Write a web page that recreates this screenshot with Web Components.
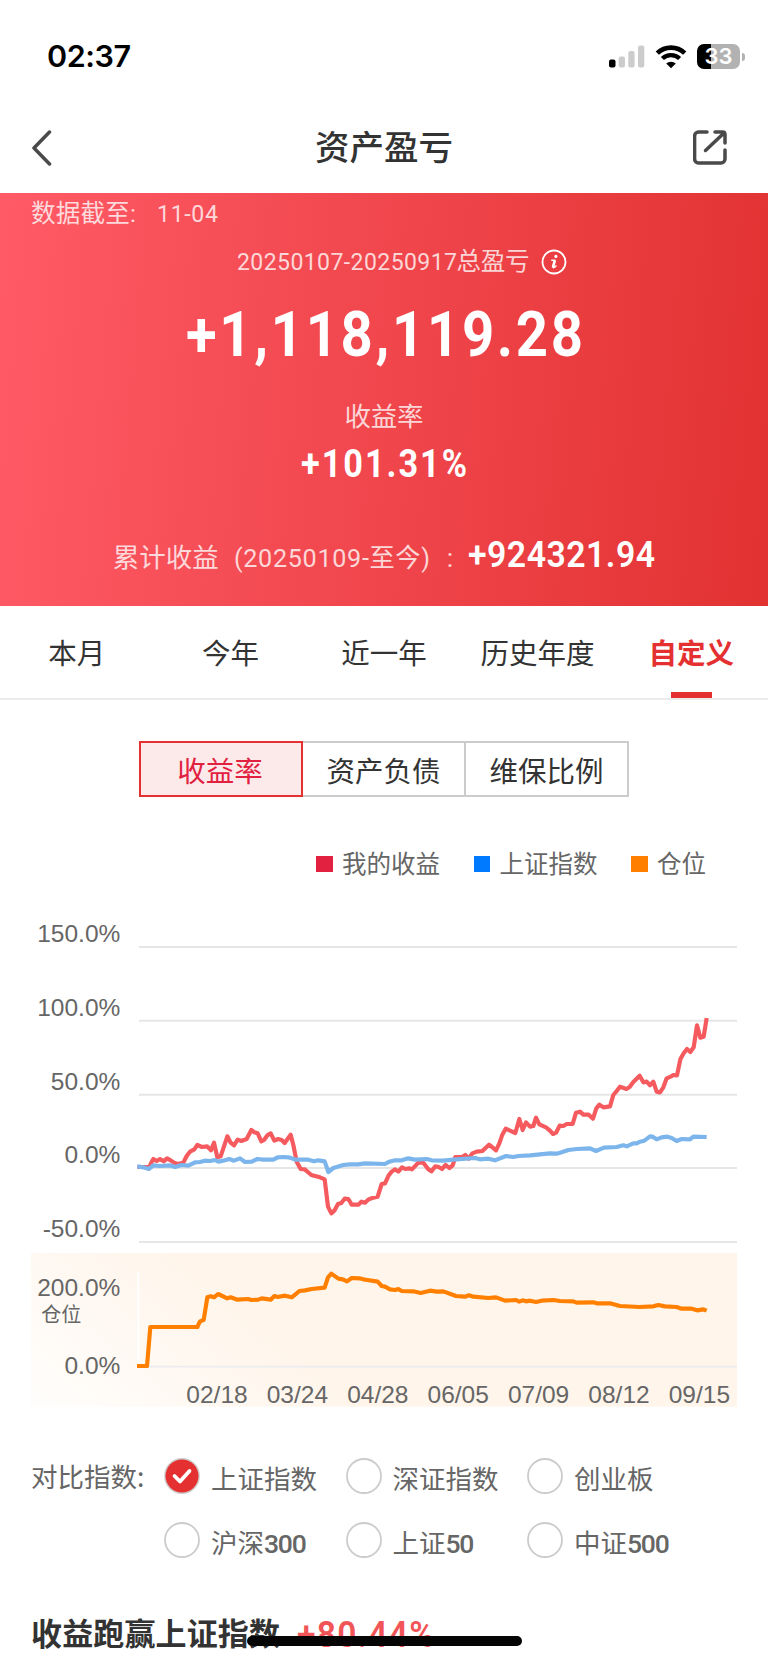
<!DOCTYPE html>
<html lang="zh-CN">
<head>
<meta charset="UTF-8">
<meta name="viewport" content="width=device-width, initial-scale=1">
<title>资产盈亏</title>
<style>
  html, body {
    margin: 0;
    background: #fff;
  }
  body {
    width: 768px;
    height: 1663px;
    overflow: hidden;
    font-family: "Noto Sans CJK SC", sans-serif;
    color: #333;
    --red: #e43030;
    --num: Roboto, "Noto Sans CJK SC", sans-serif;
  }
</style>
</head>
<body>
<profit-page></profit-page>

<script>
class StatusBar extends HTMLElement {
  constructor() {
    super();
    this.attachShadow({ mode: "open" });
  }

  connectedCallback() {
    this.shadowRoot.innerHTML = `
      <style>
        :host {
          display: flex;
          align-items: center;
          justify-content: space-between;
          height: 113px;
          padding: 0 23px 0 47px;
          box-sizing: border-box;
          color: #000;
          font: 600 30.5px/36px Inter, sans-serif;
        }
        fit-text { margin-bottom: 2px; }
        .icons { display: flex; align-items: center; gap: 10px; }
        svg { display: block; }
        .battery { display: flex; align-items: center; gap: 2px; }
        .cell {
          width: 43px;
          height: 25px;
          border-radius: 7px;
          background: linear-gradient(90deg, #000 14px, #b2b2b2 14px);
          color: #fff;
          font: 600 22px/25px Inter, sans-serif;
          text-align: center;
        }
        .nub { width: 3px; height: 8px; border-radius: 0 4px 4px 0; background: #b2b2b2; }
      </style>
      <fit-text width="84"><slot></slot></fit-text>
      <div class="icons">
        <svg width="36" height="23" viewBox="0 0 36 23">
          <rect x="0" y="14.5" width="6.5" height="8" rx="2" fill="#000"/>
          <rect x="9.7" y="11.5" width="6.3" height="11" rx="2" fill="#ccc"/>
          <rect x="19.3" y="6" width="6.3" height="16.5" rx="2" fill="#ccc"/>
          <rect x="29" y="0.5" width="6.3" height="22" rx="2" fill="#ccc"/>
        </svg>
        <svg width="32" height="24" viewBox="0 0 32 24">
          <path d="M2.3 8.2A19.5 19.5 0 0 1 29.7 8.2" fill="none" stroke="#000" stroke-width="4.7"/>
          <path d="M7.4 13.6A12.2 12.2 0 0 1 24.6 13.6" fill="none" stroke="#000" stroke-width="4.3"/>
          <path d="M16 23.3L11.2 18.6A6.9 6.9 0 0 1 20.8 18.6Z"/>
        </svg>
        <div class="battery"><div class="cell">33</div><div class="nub"></div></div>
      </div>
    `;
  }
}

class NavHeader extends HTMLElement {
  constructor() {
    super();
    this.attachShadow({ mode: "open" });
  }

  connectedCallback() {
    this.shadowRoot.innerHTML = `
      <style>
        :host {
          display: flex;
          align-items: center;
          justify-content: space-between;
          height: 80px;
          padding: 0 41px 11px 31px;
          box-sizing: border-box;
          font-size: 34.5px;
          font-weight: 500;
          line-height: 48px;
        }
        fit-text { margin: 0 0 5px 10px; }
        .side { width: 34px; }
        .side svg { display: block; fill: none; stroke: #4a4a4a; stroke-width: 3.5; stroke-linecap: round; stroke-linejoin: round; }
      </style>
      <div class="side"><svg width="22" height="36" viewBox="0 0 22 36"><path d="M18.5 2L3 18L18.5 34"/></svg></div>
      <fit-text width="138"><slot></slot></fit-text>
      <div class="side">
        <svg width="34" height="35" viewBox="0 0 34 35">
          <path d="M14 2H5.5A4 4 0 0 0 1.6 6V29A4 4 0 0 0 5.5 33H28A4 4 0 0 0 32 29V20"/>
          <path d="M22 2H29.5Q32 2 32 4.5V13M31 3L12.5 20.5"/>
        </svg>
      </div>
    `;
  }
}

class ProfitSummary extends HTMLElement {
  constructor() {
    super();
    this.attachShadow({ mode: "open" });
  }

  connectedCallback() {
    this.shadowRoot.innerHTML = `
      <style>
        :host {
          display: flex;
          flex-direction: column;
          align-items: center;
          height: 413px;
          background: linear-gradient(95deg, #ff5a66 0%, #f0464c 50%, #e23232 100%);
          color: #fff;
          font-family: var(--num);
          white-space: nowrap;
        }
        .soft { color: rgba(255, 255, 255, .78); }
        .updated {
          align-self: stretch;
          display: flex;
          gap: 21px;
          padding: 7px 0 0 31px;
          font-size: 24.6px;
          line-height: 28px;
        }
        .period {
          display: flex;
          align-items: center;
          gap: 11px;
          margin: 20px 0 0 35px;
          font-size: 24.5px;
          line-height: 28px;
        }
        .period svg { display: block; }
        .total { margin-top: 23px; font-size: 62.5px; line-height: 72px; font-weight: 700; }
        .label { margin-top: 30px; font-size: 26.5px; line-height: 32px; }
        .rate { margin-top: 9px; font-size: 38px; line-height: 44px; font-weight: 700; }
        .sum {
          display: flex;
          align-items: baseline;
          margin-top: 46px;
          font-size: 26.5px;
          line-height: 44px;
        }
        .sum .a { margin-right: 15px; }
        .sum .c { margin: 0 15px 0 17px; }
        .sum .d { font-size: 37.5px; font-weight: 600; }
      </style>
      <div class="updated soft"><fit-text width="105">数据截至:</fit-text><fit-text width="61" squeeze=".94">11-04</fit-text></div>
      <div class="period soft">
        <span><fit-text width="220" squeeze=".94">20250107-20250917</fit-text><fit-text width="73">总盈亏</fit-text></span>
        <svg width="26" height="26" viewBox="0 0 26 26">
          <circle cx="13" cy="13" r="11.5" fill="none" stroke="#fff" stroke-width="1.8"/>
          <circle cx="14.9" cy="7.4" r="1.6" fill="#fff"/>
          <path d="M10.8 11.2H14L11.9 18.2Q12.2 19.6 15 17" fill="none" stroke="#fff" stroke-width="1.5" stroke-linecap="round" stroke-linejoin="round"/>
          <path d="M13.8 11.5L12 18.2" stroke="#fff" stroke-width="2.6"/>
        </svg>
      </div>
      <div class="total"><fit-text width="397" squeeze=".9">+1,118,119.28</fit-text></div>
      <div class="label soft"><fit-text width="79">收益率</fit-text></div>
      <div class="rate"><fit-text width="166" squeeze=".9">+101.31%</fit-text></div>
      <div class="sum">
        <fit-text class="a soft" width="106">累计收益</fit-text>
        <fit-text class="b soft" width="196" squeeze=".95">(20250109-至今)</fit-text>
        <span class="c soft">:</span>
        <fit-text class="d" width="187" squeeze=".9">+924321.94</fit-text>
      </div>
    `;
  }
}

class PeriodTabs extends HTMLElement {
  constructor() {
    super();
    this.attachShadow({ mode: "open" });
  }

  connectedCallback() {
    this.shadowRoot.innerHTML = `
      <style>
        :host {
          display: grid;
          grid-template-columns: repeat(5, 1fr);
          height: 94px;
          box-sizing: border-box;
          border-bottom: 2px solid #ebebeb;
          font-size: 28.5px;
          line-height: 40px;
        }
        ::slotted(*) {
          display: flex;
          flex-direction: column;
          align-items: center;
          justify-content: space-between;
          padding-top: 26px;
          white-space: nowrap;
        }
        ::slotted([active])::after {
          content: "";
          width: 41px;
          height: 6px;
          background: var(--red);
        }
        ::slotted([active]) { color: var(--red); font-weight: 700; }
      </style>
      <slot></slot>
    `;
  }
}

class SegmentBar extends HTMLElement {
  constructor() {
    super();
    this.attachShadow({ mode: "open" });
  }

  connectedCallback() {
    this.shadowRoot.innerHTML = `
      <style>
        :host {
          display: grid;
          grid-template-columns: 164px 163px 163px;
          width: 490px;
          height: 56px;
          margin: 41px auto 0 139px;
          font-size: 28.5px;
          line-height: 50px;
          text-align: center;
        }
        ::slotted(*) {
          box-sizing: border-box;
          padding-top: 2px;
          border: 2px solid #ccc;
          border-left-width: 0;
        }
        ::slotted([active]) {
          padding-right: 2px;
          border: 2px solid var(--red);
          background: #fceaea;
          color: #e2203f;
        }
      </style>
      <slot></slot>
    `;
  }
}

class ChartLegend extends HTMLElement {
  constructor() {
    super();
    this.attachShadow({ mode: "open" });
  }

  connectedCallback() {
    const items = [
      ["我的收益", "#e2203f"],
      ["上证指数", "#007aff"],
      ["仓位", "#ff8000"]
    ];
    this.shadowRoot.innerHTML = `
      <style>
        :host {
          display: flex;
          justify-content: flex-end;
          gap: 33.5px;
          height: 36px;
          margin: 49px 62px 0 0;
          font-size: 24.5px;
          line-height: 34px;
          color: #666;
        }
        .item { display: flex; align-items: center; gap: 9.5px; }
        .item span { margin-top: -2px; }
        i { width: 16.5px; height: 16.5px; }
      </style>
      ${items.map(([name, color]) => `<div class="item"><i style="background:${color}"></i><span>${name}</span></div>`).join("")}
    `;
  }
}

class ProfitChart extends HTMLElement {
  constructor() {
    super();
    this.attachShadow({ mode: "open" });
  }

  connectedCallback() {
    // the drawing is three units to the pixel
    const grid = [["150.0%", 141], ["100.0%", 362], ["50.0%", 584], ["0.0%", 804], ["-50.0%", 1026]];
    const dates = ["02/18", "03/24", "04/28", "06/05", "07/09", "08/12", "09/15"];
    const mine = "412,801 448,801 453,790 460,777 470,783 480,777 491,784 501,775 512,781 522,788 532,792 550,788 560,768 570,755 583,748 592,735 606,741 621,739 633,751 642,728 652,772 662,769 682,709 692,728 702,736 713,719 724,723 740,717 754,690 763,697 773,700 784,724 792,720 803,705 812,700 823,722 834,717 845,720 854,729 872,704 880,735 890,785 902,807 914,808 934,825 960,832 974,838 984,920 994,940 1003,932 1014,912 1024,909 1034,896 1045,897 1055,914 1075,914 1084,905 1095,908 1106,898 1117,894 1133,890 1145,852 1155,850 1166,826 1175,815 1185,808 1195,815 1206,802 1216,807 1227,805 1236,808 1255,788 1270,788 1285,808 1294,814 1306,799 1316,801 1326,807 1337,795 1348,804 1358,796 1366,771 1386,771 1396,765 1406,776 1417,760 1430,755 1447,753 1467,734 1476,741 1488,751 1498,730 1507,704 1517,686 1530,692 1546,699 1558,657 1568,690 1578,667 1590,680 1600,678 1608,653 1618,673 1638,682 1650,692 1659,702 1668,698 1679,677 1690,678 1700,672 1718,672 1728,638 1740,635 1750,644 1766,644 1779,656 1789,625 1798,614 1810,622 1830,619 1840,585 1850,573 1860,560 1879,567 1889,561 1900,546 1919,527 1930,547 1940,545 1950,556 1960,545 1970,575 1980,577 1990,562 2000,535 2012,530 2020,525 2031,526 2041,478 2051,460 2061,447 2071,456 2081,442 2091,376 2101,413 2111,410 2120,354";
    const index = "412,799 430,802 447,807 460,796 480,798 510,796 525,801 545,795 565,797 585,787 600,786 615,782 630,783 645,780 655,785 670,782 688,777 702,782 720,775 735,786 755,785 772,777 790,779 820,779 833,772 852,771 870,773 885,779 925,779 942,784 955,781 974,784 985,816 1000,804 1030,795 1050,793 1075,793 1095,790 1155,792 1168,785 1185,781 1205,781 1225,775 1245,779 1280,777 1295,781 1330,782 1360,779 1425,774 1440,778 1465,776 1485,781 1518,768 1540,771 1555,768 1590,766 1650,760 1670,761 1685,757 1705,750 1730,747 1770,745 1788,753 1812,743 1850,741 1870,736 1880,739 1900,730 1910,730 1920,725 1933,722 1950,709 1958,710 1970,718 1985,712 2002,710 2015,714 2030,723 2045,717 2070,718 2080,710 2120,711";
    const position = "411,378 441,378 451,261 592,261 600,244 611,240 622,172 632,169 642,172 654,162 682,175 692,172 712,179 744,177 754,180 775,179 785,175 812,179 823,168 833,171 855,167 875,172 890,160 898,153 915,151 935,147 974,143 984,112 994,101 1015,116 1028,118 1041,124 1055,114 1078,115 1090,118 1102,120 1133,125 1145,138 1155,140 1170,148 1185,150 1195,147 1205,153 1240,154 1262,159 1290,152 1310,155 1330,154 1368,168 1395,170 1407,166 1420,170 1465,174 1488,172 1515,182 1548,180 1558,185 1568,181 1578,184 1590,182 1608,186 1625,182 1660,180 1680,183 1720,184 1730,188 1780,187 1790,190 1830,190 1860,198 1918,201 1960,199 1975,195 1995,199 2030,201 2045,206 2075,206 2092,211 2110,208 2120,212";

    this.shadowRoot.innerHTML = `
      <style>
        :host { display: block; height: 520px; margin-top: 18px; }
        svg { display: block; }
        text { font-family: "Liberation Sans", Arial, sans-serif; font-size: 73.5px; fill: #666; }
        .unit { font-family: "Noto Sans CJK SC", sans-serif; font-size: 60px; }
        .end { text-anchor: end; }
        .mid { text-anchor: middle; }
        polyline { fill: none; stroke-width: 12.5; stroke-linejoin: round; }
      </style>
      <svg width="768" height="520" viewBox="0 0 2304 1560">
        <defs>
          <linearGradient id="warm" gradientUnits="userSpaceOnUse" x1="100" y1="460" x2="480" y2="0">
            <stop offset="0" stop-color="#fffdfb"/>
            <stop offset="1" stop-color="#fff5eb"/>
          </linearGradient>
        </defs>
        ${grid.map(([label, y]) => `
          <path d="M417 ${y}H2211" stroke="#e6e6e6" stroke-width="6"/>
          <text class="end" x="361" y="${y - 15}">${label}</text>
        `).join("")}
        <polyline points="${mine}" stroke="#f55a5e"/>
        <polyline points="${index}" stroke="#7cb5ec"/>
        <g transform="translate(0 1020)">
          <rect x="93" y="39" width="2118" height="461" fill="url(#warm)"/>
          <path d="M415 97V380" stroke="#fff" stroke-width="6"/>
          <path d="M414 380H2211" stroke="#ebebf0" stroke-width="5"/>
          <text class="end" x="361" y="168">200.0%</text>
          <text class="unit" x="124" y="247">仓位</text>
          <text class="end" x="361" y="403">0.0%</text>
          ${dates.map((d, i) => `<text class="mid" x="${651 + i * 241.2}" y="489">${d}</text>`).join("")}
          <polyline points="${position}" stroke="#ff8000"/>
        </g>
      </svg>
    `;
  }
}

class IndexOption extends HTMLElement {
  constructor() {
    super();
    this.attachShadow({ mode: "open" });
  }

  connectedCallback() {
    const dot = this.hasAttribute("checked")
      ? `<circle cx="18" cy="18" r="16.5" fill="#e43030"/><path d="M10.5 18L16 23.5L25.5 13" fill="none" stroke="#fff" stroke-width="3.8" stroke-linecap="round" stroke-linejoin="round"/>`
      : "";
    this.shadowRoot.innerHTML = `
      <style>
        :host { display: flex; align-items: center; gap: 11px; height: 36px; white-space: nowrap; }
        svg { display: block; flex: none; }
        div { font: 400 26.5px/30px "Noto Sans CJK SC", sans-serif; padding-top: 6px; }
        b { font: 500 26.5px/30px Roboto, sans-serif; letter-spacing: -1.2px; }
      </style>
      <svg width="36" height="36" viewBox="0 0 36 36">
        <circle cx="18" cy="18" r="17" fill="#fff" stroke="#ccc" stroke-width="1.8"/>${dot}
      </svg>
      <div>${this.getAttribute("name")}<b>${this.getAttribute("code") || ""}</b></div>
    `;
  }
}

class IndexPicker extends HTMLElement {
  constructor() {
    super();
    this.attachShadow({ mode: "open" });
  }

  connectedCallback() {
    this.shadowRoot.innerHTML = `
      <style>
        :host {
          display: flex;
          padding: 38px 0 0 31px;
          color: #666;
        }
        .label { width: 133px; font-size: 26.5px; line-height: 36px; }
        .options { display: grid; grid-template-columns: repeat(3, 181.5px); row-gap: 28px; }
      </style>
      <div class="label"><slot name="label"></slot></div>
      <div class="options"><slot></slot></div>
    `;
  }
}

class BeatLine extends HTMLElement {
  constructor() {
    super();
    this.attachShadow({ mode: "open" });
  }

  connectedCallback() {
    this.shadowRoot.innerHTML = `
      <style>
        :host {
          display: flex;
          align-items: flex-start;
          gap: 17px;
          padding: 54px 0 0 31px;
          font-size: 31px;
          line-height: 40px;
          font-weight: 700;
          white-space: nowrap;
        }
        .value { padding-top: 3px; font-family: var(--num); font-size: 36.5px; font-weight: 600; color: #f25558; }
      </style>
      <fit-text width="249"><slot></slot></fit-text>
      <fit-text class="value" width="137" squeeze=".92">+80.44%</fit-text>
    `;
  }
}

class HomeIndicator extends HTMLElement {
  constructor() {
    super();
    this.attachShadow({ mode: "open" });
    this.shadowRoot.innerHTML = `
      <style>
        :host {
          position: absolute;
          left: 247px;
          bottom: 17px;
          width: 275px;
          height: 10px;
          border-radius: 5px;
          background: #050505;
        }
      </style>
    `;
  }
}

class ProfitPage extends HTMLElement {
  constructor() {
    super();
    this.attachShadow({ mode: "open" });
  }

  connectedCallback() {
    this.shadowRoot.innerHTML = `
      <style>
        :host { display: block; position: relative; height: 1663px; overflow: hidden; }
      </style>
      <status-bar>02:37</status-bar>
      <nav-header>资产盈亏</nav-header>
      <profit-summary></profit-summary>
      <period-tabs>
        <span>本月</span>
        <span>今年</span>
        <span>近一年</span>
        <span>历史年度</span>
        <span active>自定义</span>
      </period-tabs>
      <segment-bar>
        <span active>收益率</span>
        <span>资产负债</span>
        <span>维保比例</span>
      </segment-bar>
      <chart-legend></chart-legend>
      <profit-chart></profit-chart>
      <index-picker>
        <span slot="label">对比指数:</span>
        <index-option name="上证指数" checked></index-option>
        <index-option name="深证指数"></index-option>
        <index-option name="创业板"></index-option>
        <index-option name="沪深" code="300"></index-option>
        <index-option name="上证" code="50"></index-option>
        <index-option name="中证" code="500"></index-option>
      </index-picker>
      <beat-line>收益跑赢上证指数</beat-line>
      <home-indicator></home-indicator>
    `;
  }
}

// Spreads its text over a given width by letter spacing;
// squeeze narrows the glyphs themselves
class FitText extends HTMLElement {
  constructor() {
    super();
    this.attachShadow({ mode: "open" });
    this.shadowRoot.innerHTML = `
      <style>
        :host { display: inline-block; white-space: nowrap; }
        span { display: inline-block; transform-origin: 0 50%; }
      </style>
      <span><slot></slot></span>
    `;
  }

  connectedCallback() {
    const width = Number(this.getAttribute("width"));
    const squeeze = Number(this.getAttribute("squeeze") || 1);
    const span = this.shadowRoot.querySelector("span");
    const slot = this.querySelector("slot");
    const text = slot ? this.getRootNode().host.textContent : this.textContent;
    const natural = span.getBoundingClientRect().width;
    const count = text.trim().length - 1;
    span.style.letterSpacing = `${(width / squeeze - natural) / count}px`;
    if (squeeze !== 1) {
      span.style.transform = `scaleX(${squeeze})`;
    }
    this.style.width = `${width}px`;
  }
}

customElements.define("status-bar", StatusBar);
customElements.define("nav-header", NavHeader);
customElements.define("profit-summary", ProfitSummary);
customElements.define("period-tabs", PeriodTabs);
customElements.define("segment-bar", SegmentBar);
customElements.define("chart-legend", ChartLegend);
customElements.define("profit-chart", ProfitChart);
customElements.define("index-option", IndexOption);
customElements.define("index-picker", IndexPicker);
customElements.define("beat-line", BeatLine);
customElements.define("home-indicator", HomeIndicator);
customElements.define("profit-page", ProfitPage);
customElements.define("fit-text", FitText);
</script>
</body>
</html>
